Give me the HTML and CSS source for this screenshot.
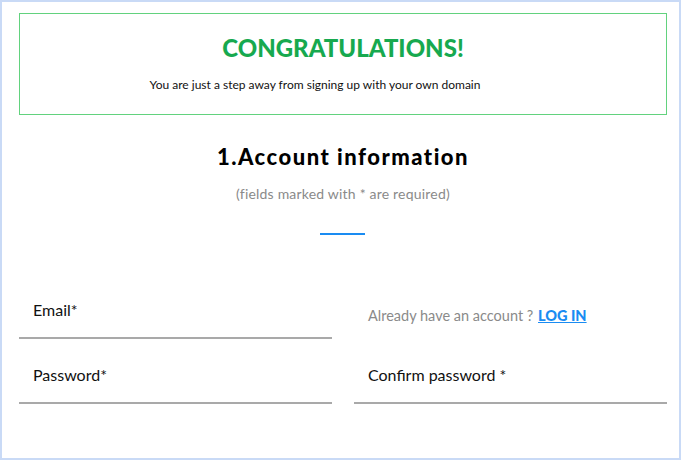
FILE: index.html
```html
<!DOCTYPE html>
<html lang="en">
<head>
  <meta charset="UTF-8" />
  <title>Sign up</title>
  <link rel="stylesheet" href="styles.css">
</head>
<body>
  <div class="page">
    <div class="congrats">
      <h1>CONGRATULATIONS!</h1>
      <p>You are just a step away from signing up with your own domain</p>
    </div>

    <h2 class="section-title">1.Account information</h2>
    <p class="hint">(fields marked with * are required)</p>
    <div class="divider"></div>

    <div class="form-grid">
      <div class="field"><label>Email*</label></div>
      <div class="login-note">Already have an account ? <a href="#">LOG IN</a></div>
      <div class="field"><label>Password*</label></div>
      <div class="field"><label>Confirm password *</label></div>
    </div>
  </div>
</body>
</html>
```

FILE: styles.css
```css
body {
  margin: 0;
  background: #fff;
  font-family: "Lato", "Liberation Sans", sans-serif;
  color: #111;
}
.page {
  box-sizing: border-box;
  width: 681px;
  height: 460px;
  border: 2px solid #c9daf6;
  padding: 11px 0 0 17px;
}
.congrats {
  box-sizing: border-box;
  width: 648px;
  height: 102px;
  border: 1px solid #62d27e;
  padding-top: 20px;
  text-align: center;
}
.congrats h1 {
  margin: 0;
  font-size: 24px;
  line-height: 28px;
  font-weight: 900;
  color: #17a94f;
}
.congrats p {
  margin: 15px 0 0;
  padding-right: 56px;
  font-size: 12px;
  line-height: 16px;
  color: #111;
}
.section-title {
  width: 648px;
  margin: 28px 0 0;
  font-size: 22px;
  line-height: 28px;
  font-weight: 900;
  letter-spacing: 1.5px;
  text-align: center;
  color: #000;
}
.hint {
  width: 648px;
  margin: 13px 0 0;
  font-size: 14px;
  line-height: 20px;
  letter-spacing: 0.2px;
  text-align: center;
  color: #8a8a8a;
}
.divider {
  width: 45px;
  height: 2px;
  background: #1a8cf2;
  margin: 29px 0 0 301px;
}
.form-grid {
  display: grid;
  grid-template-columns: 313px 313px;
  column-gap: 22px;
  row-gap: 26px;
  margin-top: 65px;
}
.field {
  border-bottom: 2px solid #a9a9a9;
  padding: 0 0 17px 14px;
}
.field label {
  display: block;
  font-size: 16px;
  line-height: 20px;
  color: #111;
}
.login-note {
  padding: 6px 0 0 14px;
  font-size: 14.5px;
  line-height: 20px;
  color: #8a8a8a;
}
.login-note a {
  color: #1a8cf2;
  font-weight: 900;
  text-decoration: underline;
  margin-left: 1px;
}
```
